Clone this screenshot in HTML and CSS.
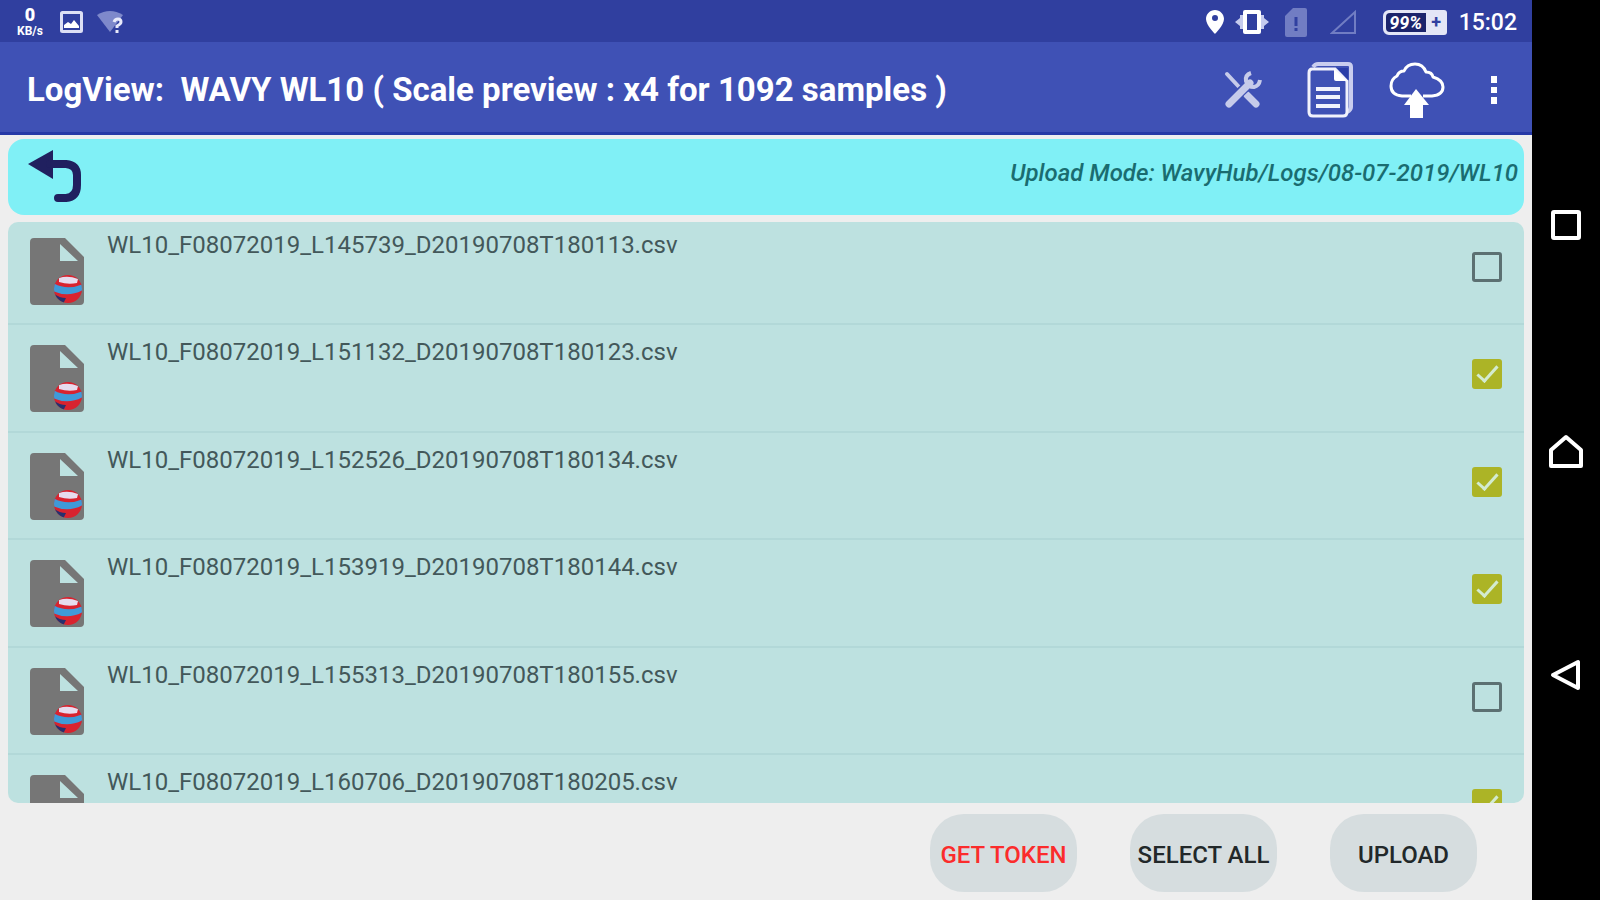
FILE: index.html
```html
<!DOCTYPE html>
<html lang="en">
  <head>
    <meta charset="utf-8">
    <title>LogView</title>
    <link rel="stylesheet" href="styles.css">
  </head>
  <body>
    <!-- shared file icon -->
    <svg width="0" height="0" class="defs">
      <symbol id="csv-file" viewBox="0 0 54 68">
        <path fill="#767676" fill-rule="evenodd" d="M4 0H35L54 19V63Q54 67 50 67H4Q0 67 0 63V4Q0 0 4 0ZM30 6V23H48Z"/>
        <clipPath id="ball"><circle cx="38" cy="51" r="14"/></clipPath>
        <g clip-path="url(#ball)">
          <rect x="24" y="37" width="28" height="29" fill="#d8232f"/>
          <path fill="#e6dcee" d="M29 40Q38 37 48 41L47 45Q38 47 29 44Z"/>
          <path fill="#3f9ad8" d="M23 45Q37 53 53 46V52Q38 60 23 53Z"/>
          <path fill="#26306f" d="M23 55Q29 60 36 60L33 66H24Z"/>
        </g>
      </symbol>
    </svg>

    <div class="app">
      <div class="status-bar">
        <div class="speed"><b>0</b><span>KB/s</span></div>
        <svg class="picture" width="23" height="22" viewBox="0 0 23 22">
          <rect x="1.5" y="1.5" width="20" height="19" rx="1" fill="none" stroke="#dcdff5" stroke-width="3"/>
          <path fill="#fff" d="M4 17V14L8 11L11 13L14 9L19 15V17Z"/>
        </svg>
        <svg class="wifi" width="28" height="22" viewBox="0 0 28 22">
          <path fill="#7e89cb" d="M0 4Q13 -4 26 4L13 21Z"/>
          <path fill="none" stroke="#e8eafa" stroke-width="3" d="M17 11Q18 8 21 8Q24 8 24 11Q24 13 20 15V17M20 19V22"/>
        </svg>
        <div class="status-right">
          <svg width="20" height="26" viewBox="0 0 20 26">
            <path fill="#fff" fill-rule="evenodd" d="M10 1C5 1 1 5 1 10C1 16 10 25 10 25S19 16 19 10C19 5 15 1 10 1ZM10 6A3 3 0 1 1 10 12A3 3 0 1 1 10 6Z"/>
          </svg>
          <svg class="vibrate" width="34" height="26" viewBox="0 0 34 26">
            <path fill="#fff" fill-rule="evenodd" d="M10 1H24Q26 1 26 3V23Q26 25 24 25H10Q8 25 8 23V3Q8 1 10 1ZM12 5V21H22V5Z"/>
            <path fill="#c5cbee" d="M8 6V20H5V17L0 13L5 9V6ZM26 6V20H29V17L34 13L29 9V6Z"/>
          </svg>
          <svg class="sim" width="22" height="29" viewBox="0 0 22 29">
            <path fill="#717dc3" d="M8 0H20Q22 0 22 2V27Q22 29 20 29H2Q0 29 0 27V8Z"/>
            <path stroke="#3040a0" stroke-width="3" d="M11 9V18M11 20V23"/>
          </svg>
          <svg class="signal" width="28" height="26" viewBox="0 0 28 26">
            <path fill="none" stroke="#717dc3" stroke-width="2" d="M2 24H25V3Z"/>
          </svg>
          <div class="battery"><span>99%</span><i>+</i></div>
          <span class="clock">15:02</span>
        </div>
      </div>

      <header class="app-bar">
        <h1>LogView:&nbsp; WAVY WL10 ( Scale preview : x4 for 1092 samples )</h1>
        <button class="icon-btn" aria-label="Tools">
          <svg width="38" height="38" viewBox="0 0 38 38">
            <path stroke="#c6cbea" stroke-width="4" stroke-linecap="round" d="M3 3L16 17"/>
            <path stroke="#c6cbea" stroke-width="7" stroke-linecap="round" d="M23 24L32 33"/>
            <path stroke="#3f51b5" stroke-width="10" d="M8 29L28 10"/>
            <path stroke="#c6cbea" stroke-width="7" stroke-linecap="round" d="M5 33L26 12"/>
            <path fill="none" stroke="#c6cbea" stroke-width="4" d="M27 2Q21 4 22 10Q24 16 30 16Q35 15 36 9"/>
          </svg>
        </button>
        <button class="icon-btn" aria-label="Logs">
          <svg width="46" height="56" viewBox="0 0 46 56">
            <path fill="none" stroke="#c9cdef" stroke-width="4" d="M6 5Q8 2 11 2H41Q44 2 44 5V45Q44 48 40 50"/>
            <path fill="none" stroke="#f1f2fc" stroke-width="3" d="M5 7H28L40 19V50Q40 54 36 54H6Q2 54 2 50V11Q2 7 5 7Z"/>
            <path fill="#2a3da8" d="M30 6H41V18Z"/>
            <path fill="#fff" d="M27 7L40 19H29Q27 19 27 17Z"/>
            <path stroke="#f1f2fc" stroke-width="4" d="M9 27H33M9 35H33M9 44H33"/>
          </svg>
        </button>
        <button class="icon-btn" aria-label="Cloud upload">
          <svg width="56" height="56" viewBox="0 0 56 56">
            <path fill="none" stroke="#fff" stroke-width="3" stroke-linejoin="round" d="M22 34H13Q2 33 2 24Q2 17 8 14Q10 9 15 9Q18 2 26 2Q34 2 37 10Q43 10 44 15Q54 18 54 25Q54 33 43 34H34"/>
            <path fill="#fff" d="M27 27L40 43H34V56H21V43H15Z"/>
          </svg>
        </button>
        <button class="icon-btn" aria-label="More options">
          <svg width="8" height="28" viewBox="0 0 8 28">
            <path fill="#fff" d="M1 0H7V7H1ZM1 11H7V17H1ZM1 21H7V28H1Z"/>
          </svg>
        </button>
      </header>

      <main>
        <div class="upload-mode">
          <button class="back" aria-label="Back">
            <svg width="54" height="54" viewBox="0 0 54 54">
              <path fill="#20205f" d="M0 14L25 0V29Z"/>
              <path fill="none" stroke="#20205f" stroke-width="8" stroke-linecap="round" d="M22 14H38Q49 15 49 25V35Q49 47 38 48H30"/>
            </svg>
          </button>
          <p>Upload Mode: WavyHub/Logs/08-07-2019/WL10</p>
        </div>

        <div class="files">
          <ul>
            <li>
              <svg class="file-icon"><use href="#csv-file"/></svg>
              <label for="f1">WL10_F08072019_L145739_D20190708T180113.csv</label>
              <input type="checkbox" id="f1">
            </li>
            <li>
              <svg class="file-icon"><use href="#csv-file"/></svg>
              <label for="f2">WL10_F08072019_L151132_D20190708T180123.csv</label>
              <input type="checkbox" id="f2" checked>
            </li>
            <li>
              <svg class="file-icon"><use href="#csv-file"/></svg>
              <label for="f3">WL10_F08072019_L152526_D20190708T180134.csv</label>
              <input type="checkbox" id="f3" checked>
            </li>
            <li>
              <svg class="file-icon"><use href="#csv-file"/></svg>
              <label for="f4">WL10_F08072019_L153919_D20190708T180144.csv</label>
              <input type="checkbox" id="f4" checked>
            </li>
            <li>
              <svg class="file-icon"><use href="#csv-file"/></svg>
              <label for="f5">WL10_F08072019_L155313_D20190708T180155.csv</label>
              <input type="checkbox" id="f5">
            </li>
            <li>
              <svg class="file-icon"><use href="#csv-file"/></svg>
              <label for="f6">WL10_F08072019_L160706_D20190708T180205.csv</label>
              <input type="checkbox" id="f6" checked>
            </li>
          </ul>
        </div>

        <div class="actions">
          <button class="btn token">GET TOKEN</button>
          <button class="btn">SELECT ALL</button>
          <button class="btn">UPLOAD</button>
        </div>
      </main>
    </div>

    <nav class="nav-bar">
      <button aria-label="Recent apps">
        <svg width="34" height="34" viewBox="0 0 34 34"><rect x="4" y="4" width="26" height="26" rx="1" fill="none" stroke="#fff" stroke-width="4"/></svg>
      </button>
      <button aria-label="Home">
        <svg width="38" height="36" viewBox="0 0 38 36"><path fill="none" stroke="#fff" stroke-width="4" stroke-linejoin="round" d="M19 5L34 18V34H4V18Z"/></svg>
      </button>
      <button aria-label="Back">
        <svg width="34" height="34" viewBox="0 0 34 34"><path fill="none" stroke="#fff" stroke-width="4" stroke-linejoin="round" d="M4 17L29 4V30Z"/></svg>
      </button>
    </nav>
  </body>
</html>
```
FILE: styles.css
```css
body {
  margin: 0;
  height: 100vh;
  display: flex;
  overflow: hidden;
  background: #eeeeee;
  font-family: Roboto, "Liberation Sans", sans-serif;
}

button {
  border: none;
  background: none;
  padding: 0;
  font-family: inherit;
}

svg {
  display: block;
  flex: none;
}

.defs {
  position: absolute;
}

.app {
  flex: 1;
  min-width: 0;
  display: flex;
  flex-direction: column;
}

/* status bar */

.status-bar {
  height: 42px;
  flex: none;
  box-sizing: border-box;
  padding: 2px 15px 0;
  display: flex;
  align-items: center;
  background: #303f9f;
  color: #fff;
}

.speed {
  width: 30px;
  display: flex;
  flex-direction: column;
  align-items: center;
  font-size: 12px;
  font-weight: bold;
  line-height: 14px;
}

.speed b {
  font-size: 18px;
  line-height: 18px;
}

.picture {
  margin-left: 15px;
}

.wifi {
  margin-left: 14px;
}

.status-right {
  margin-left: auto;
  display: flex;
  align-items: center;
}

.vibrate {
  margin-left: 10px;
}

.sim {
  margin-left: 16px;
}

.signal {
  margin-left: 23px;
}

.battery {
  box-sizing: border-box;
  width: 64px;
  height: 25px;
  margin-left: 25px;
  padding: 3px 0 3px 3px;
  display: flex;
  background: #e4e6f6;
  border-radius: 6px 3px 3px 6px;
}

.battery span {
  width: 40px;
  background: #1c246c;
  border-radius: 4px 0 0 4px;
  font-size: 18px;
  font-weight: bold;
  font-style: italic;
  line-height: 19px;
  text-align: center;
}

.battery i {
  flex: 1;
  color: #303f9f;
  font-size: 18px;
  font-weight: bold;
  font-style: normal;
  line-height: 18px;
  text-align: center;
}

.clock {
  margin-left: 12px;
  font-size: 23px;
  font-weight: 500;
}

/* title and toolbar */

.app-bar {
  height: 93px;
  flex: none;
  box-sizing: border-box;
  padding: 5px 34px 0 27px;
  display: flex;
  align-items: center;
  background: #3f51b5;
  border-bottom: 3px solid #2639a6;
}

.app-bar h1 {
  flex: 1;
  margin: 0;
  color: #fff;
  font-size: 33px;
  font-weight: bold;
  white-space: nowrap;
}

.icon-btn + .icon-btn {
  margin-left: 45px;
}

.icon-btn:nth-of-type(3) {
  margin-left: 36px;
}

/* content */

main {
  flex: 1;
  min-height: 0;
  padding: 4px 8px 0;
  display: flex;
  flex-direction: column;
}

.upload-mode {
  height: 76px;
  flex: none;
  box-sizing: border-box;
  padding: 11px 6px 10px 20px;
  display: flex;
  justify-content: space-between;
  align-items: flex-start;
  background: #80f0f6;
  border-radius: 16px;
}

.upload-mode p {
  margin: 8px 0 0;
  color: #1a6c70;
  font-size: 24px;
  font-weight: 500;
  font-style: italic;
  line-height: 30px;
}

.files {
  flex: 1;
  min-height: 0;
  margin-top: 7px;
  overflow: hidden;
  background: #bde1e0;
  border-radius: 10px;
}

/* the list is scrolled down a little */
.files ul {
  margin: -4px 0 0;
  padding: 0;
  list-style: none;
}

.files li {
  height: 107px;
  box-sizing: border-box;
  padding: 12px 22px 0;
  display: flex;
  align-items: flex-start;
  border-bottom: 2px solid #b2d8d8;
}

.files li:nth-child(even) {
  height: 108px;
}

.file-icon {
  width: 54px;
  height: 68px;
  margin-top: 8px;
}

.files label {
  flex: 1;
  margin-left: 23px;
  color: #43585a;
  font-size: 24px;
  line-height: 30px;
}

.files input {
  appearance: none;
  box-sizing: border-box;
  width: 30px;
  height: 30px;
  margin: 22px 0 0;
  border: 3px solid #5c7072;
  border-radius: 3px;
}

.files input:checked {
  border: none;
  background: #acb426;
}

.files input:checked::after {
  content: "";
  display: block;
  box-sizing: border-box;
  width: 11px;
  height: 21px;
  margin: 2px 0 0 10px;
  border: solid #d3ebd0;
  border-width: 0 3px 3px 0;
  transform: rotate(42deg);
}

/* bottom buttons */

.actions {
  flex: none;
  padding: 11px 47px 8px 0;
  display: flex;
  justify-content: flex-end;
  gap: 53px;
}

.btn {
  width: 147px;
  height: 78px;
  padding-top: 3px;
  border-radius: 34px;
  background: #d6dddf;
  color: #22282a;
  font-size: 24px;
  font-weight: 500;
  white-space: nowrap;
}

.token {
  color: #fb2c2c;
}

/* system navigation */

.nav-bar {
  width: 68px;
  flex: none;
  box-sizing: border-box;
  padding: 112px 0;
  display: flex;
  flex-direction: column;
  background: #000;
}

.nav-bar button {
  flex: 1;
  display: flex;
  align-items: center;
  justify-content: center;
}
```
